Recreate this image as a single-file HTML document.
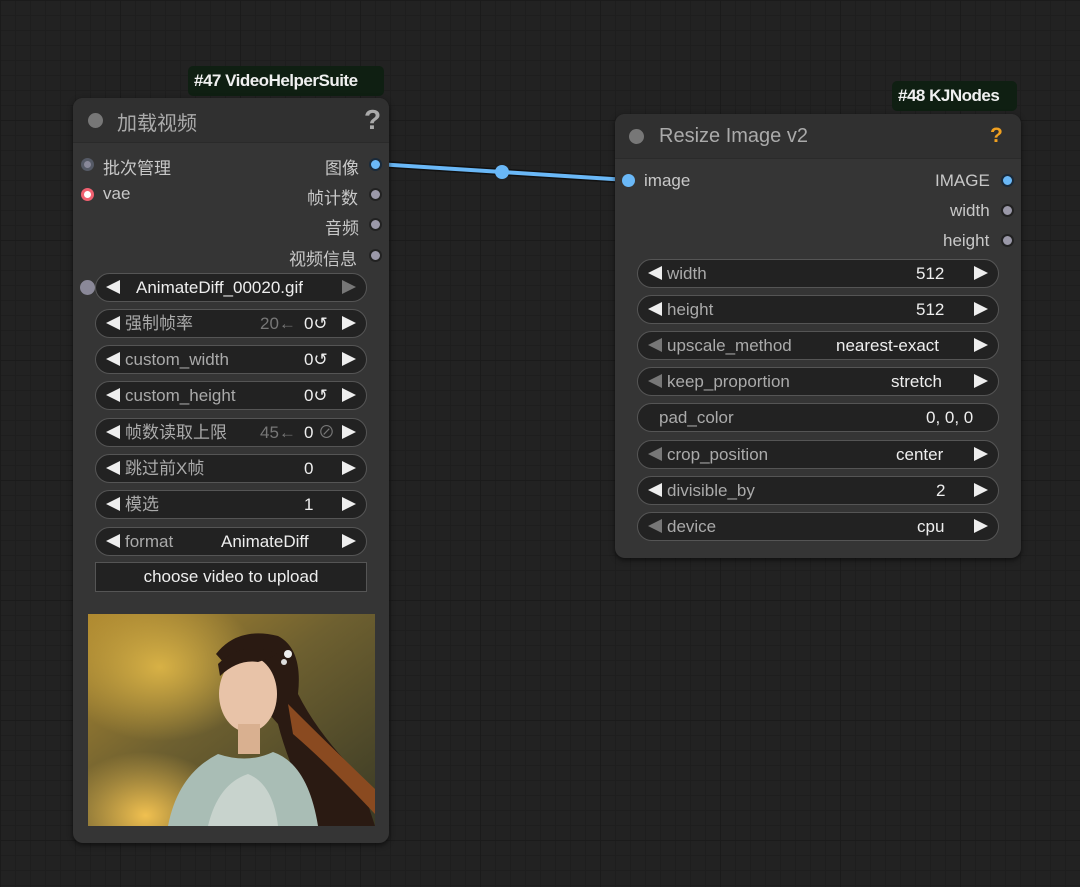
<!DOCTYPE html>
<html><head><meta charset="utf-8"><style>
*{margin:0;padding:0;box-sizing:border-box}
body{width:1080px;height:887px;overflow:hidden;position:relative;
background-color:#222;
background-image:linear-gradient(#1b1b1b 1px,transparent 1px),linear-gradient(90deg,#1b1b1b 1px,transparent 1px),linear-gradient(#1e1e1e 1px,transparent 1px),linear-gradient(90deg,#1e1e1e 1px,transparent 1px);
background-size:120px 120px,120px 120px,15px 15px,15px 15px;
font-family:"Liberation Sans","Noto Sans CJK SC",sans-serif;color:#ddd}
.a{position:absolute}
.badge{position:absolute;background:#0f1f12;color:#f0f0f0;font-weight:bold;font-size:17px;border-radius:5px;padding:0 6px;height:30px;line-height:30px;letter-spacing:-0.5px}
.node{position:absolute;background:#353535;border-radius:10px;box-shadow:0 2px 6px rgba(0,0,0,.6)}
.title{position:absolute;left:0;top:0;right:0;background:#303030;border-radius:10px 10px 0 0;border-bottom:1px solid #2a2a2a}
.dot{position:absolute;width:13px;height:13px;border-radius:50%}
.lbl{position:absolute;font-size:17px;color:#c8c8c8;white-space:nowrap}
.w{position:absolute;height:29px;border:1.5px solid #555;background:#222;border-radius:15px;font-size:17px;line-height:27px;color:#aaa;white-space:nowrap}
.w .l{position:absolute;left:10px;top:6px;width:0;height:0;border-top:7.5px solid transparent;border-bottom:7.5px solid transparent;border-right:14px solid #eee}
.w .n{position:absolute;left:29px}
.w .v{position:absolute;color:#eee}
.w .r{position:absolute;right:10px;top:6px;width:0;height:0;border-top:7.5px solid transparent;border-bottom:7.5px solid transparent;border-left:14px solid #eee}
.w .l.dim{border-right-color:#777}
.w .r.dim{border-left-color:#777}
.dim{color:#777!important}
</style></head><body>

<svg class="a" style="left:0;top:0" width="1080" height="887">
<path d="M378 164 L502 172 L628 180" stroke="#111" stroke-width="7" fill="none"/>
<path d="M378 164 L502 172 L628 180" stroke="#6ab8f7" stroke-width="4" fill="none"/>
<circle cx="502" cy="172" r="7" fill="#6ab8f7"/>
</svg>

<div class="badge" style="left:188px;top:66px;width:196px">#47 VideoHelperSuite</div>
<div class="badge" style="left:892px;top:81px;width:125px">#48 KJNodes</div>

<!-- Node 47 -->
<div class="node" style="left:73px;top:98px;width:316px;height:745px">
 <div class="title" style="height:45px"></div>
 <div class="dot" style="left:15px;top:15px;width:15px;height:15px;background:#777"></div>
 <div class="lbl" style="left:44px;top:9px;font-size:20px;color:#aaa">加载视频</div>
 <div class="lbl" style="left:291px;top:6px;font-size:28px;font-weight:bold;color:#aaa">?</div>
</div>
<div class="dot" style="left:81px;top:158px;background:#889;border:3px solid #555a66"></div>
<div class="lbl" style="left:103px;top:154px">批次管理</div>
<div class="dot" style="left:81px;top:188px;background:#fff;border:3.5px solid #f06070"></div>
<div class="lbl" style="left:103px;top:184px">vae</div>
<div class="lbl" style="left:325px;top:154px">图像</div>
<div class="dot" style="left:369px;top:158px;background:#6ab8f7;border:2px solid #1a2a3a"></div>
<div class="lbl" style="left:307px;top:184px">帧计数</div>
<div class="dot" style="left:369px;top:188px;background:#9a98a8;border:2px solid #222"></div>
<div class="lbl" style="left:325px;top:214px">音频</div>
<div class="dot" style="left:369px;top:218px;background:#9a98a8;border:2px solid #222"></div>
<div class="lbl" style="left:289px;top:245px">视频信息</div>
<div class="dot" style="left:369px;top:249px;background:#9a98a8;border:2px solid #222"></div>

<div class="dot" style="left:80px;top:280px;width:15px;height:15px;background:#8a8898"></div>
<div class="w" style="left:95px;top:273px;width:272px"><span class="l"></span><span class="v" style="left:40px">AnimateDiff_00020.gif</span><span class="r dim"></span></div>
<div class="w" style="left:95px;top:309px;width:272px"><span class="l"></span><span class="n">强制帧率</span><span class="v dim" style="left:164px">20←</span><span class="v" style="left:208px">0↺</span><span class="r"></span></div>
<div class="w" style="left:95px;top:345px;width:272px"><span class="l"></span><span class="n">custom_width</span><span class="v" style="left:208px">0↺</span><span class="r"></span></div>
<div class="w" style="left:95px;top:381px;width:272px"><span class="l"></span><span class="n">custom_height</span><span class="v" style="left:208px">0↺</span><span class="r"></span></div>
<div class="w" style="left:95px;top:418px;width:272px"><span class="l"></span><span class="n">帧数读取上限</span><span class="v dim" style="left:164px">45←</span><span class="v" style="left:208px">0</span><span class="v dim" style="left:222px">⊘</span><span class="r"></span></div>
<div class="w" style="left:95px;top:454px;width:272px"><span class="l"></span><span class="n">跳过前X帧</span><span class="v" style="left:208px">0</span><span class="r"></span></div>
<div class="w" style="left:95px;top:490px;width:272px"><span class="l"></span><span class="n">模选</span><span class="v" style="left:208px">1</span><span class="r"></span></div>
<div class="w" style="left:95px;top:527px;width:272px"><span class="l"></span><span class="n">format</span><span class="v" style="left:125px">AnimateDiff</span><span class="r"></span></div>
<div class="a" style="left:95px;top:562px;width:272px;height:30px;background:#222;border:1.5px solid #555;color:#eee;font-size:17px;text-align:center;line-height:28px">choose video to upload</div>

<svg class="a" style="left:88px;top:614px" width="287" height="212" viewBox="0 0 287 212">
<defs>
<linearGradient id="bg" x1="0" y1="0" x2="1" y2="1"><stop offset="0" stop-color="#b08a30"/><stop offset=".45" stop-color="#6e6030"/><stop offset="1" stop-color="#3a3a25"/></linearGradient>
<radialGradient id="gl" cx=".25" cy=".25" r=".35"><stop offset="0" stop-color="#e0b848" stop-opacity=".9"/><stop offset="1" stop-color="#e0b848" stop-opacity="0"/></radialGradient>
<radialGradient id="gl2" cx=".2" cy=".95" r=".3"><stop offset="0" stop-color="#f0c050"/><stop offset="1" stop-color="#f0c050" stop-opacity="0"/></radialGradient>
</defs>
<rect width="287" height="212" fill="url(#bg)"/>
<rect width="287" height="212" fill="url(#gl)"/>
<rect width="287" height="212" fill="url(#gl2)"/>
<path d="M128 40 Q150 12 190 22 Q215 35 210 80 Q230 120 270 160 L287 212 L230 212 Q200 150 190 110 Z" fill="#2a1a12"/>
<path d="M200 90 Q240 130 287 175 L287 200 Q240 150 205 120Z" fill="#8a4a20"/>
<ellipse cx="160" cy="80" rx="29" ry="38" fill="#e8c3a8"/>
<path d="M130 50 Q155 25 190 40 Q180 45 170 48 Q150 45 132 62Z" fill="#2a1a12"/>
<rect x="150" y="110" width="22" height="30" fill="#d9b090"/>
<path d="M80 212 Q90 160 130 140 Q160 150 185 138 Q220 150 230 212Z" fill="#a9bdb5"/>
<path d="M120 212 Q130 170 160 160 Q185 170 190 212Z" fill="#c8d3cd"/>
<circle cx="200" cy="40" r="4" fill="#eee"/><circle cx="196" cy="48" r="3" fill="#ddd"/>
</svg>

<!-- Node 48 -->
<div class="node" style="left:615px;top:114px;width:406px;height:444px">
 <div class="title" style="height:45px"></div>
 <div class="dot" style="left:14px;top:15px;width:15px;height:15px;background:#777"></div>
 <div class="lbl" style="left:44px;top:11px;font-size:20px;color:#aaa">Resize Image v2</div>
 <div class="lbl" style="left:375px;top:10px;font-size:21px;font-weight:bold;color:#f0a020">?</div>
</div>
<div class="dot" style="left:622px;top:174px;background:#6ab8f7"></div>
<div class="lbl" style="left:644px;top:171px">image</div>
<div class="lbl" style="left:935px;top:171px">IMAGE</div>
<div class="dot" style="left:1001px;top:174px;background:#6ab8f7;border:2px solid #1a2a3a"></div>
<div class="lbl" style="left:950px;top:201px">width</div>
<div class="dot" style="left:1001px;top:204px;background:#9a98a8;border:2px solid #222"></div>
<div class="lbl" style="left:943px;top:231px">height</div>
<div class="dot" style="left:1001px;top:234px;background:#9a98a8;border:2px solid #222"></div>

<div class="w" style="left:637px;top:259px;width:362px"><span class="l"></span><span class="n">width</span><span class="v" style="left:278px">512</span><span class="r"></span></div>
<div class="w" style="left:637px;top:295px;width:362px"><span class="l"></span><span class="n">height</span><span class="v" style="left:278px">512</span><span class="r"></span></div>
<div class="w" style="left:637px;top:331px;width:362px"><span class="l dim"></span><span class="n">upscale_method</span><span class="v" style="left:198px">nearest-exact</span><span class="r"></span></div>
<div class="w" style="left:637px;top:367px;width:362px"><span class="l dim"></span><span class="n">keep_proportion</span><span class="v" style="left:253px">stretch</span><span class="r"></span></div>
<div class="w" style="left:637px;top:403px;width:362px"><span class="n" style="left:21px">pad_color</span><span class="v" style="left:288px">0, 0, 0</span></div>
<div class="w" style="left:637px;top:440px;width:362px"><span class="l dim"></span><span class="n">crop_position</span><span class="v" style="left:258px">center</span><span class="r"></span></div>
<div class="w" style="left:637px;top:476px;width:362px"><span class="l"></span><span class="n">divisible_by</span><span class="v" style="left:298px">2</span><span class="r"></span></div>
<div class="w" style="left:637px;top:512px;width:362px"><span class="l dim"></span><span class="n">device</span><span class="v" style="left:279px">cpu</span><span class="r"></span></div>
</body></html>
